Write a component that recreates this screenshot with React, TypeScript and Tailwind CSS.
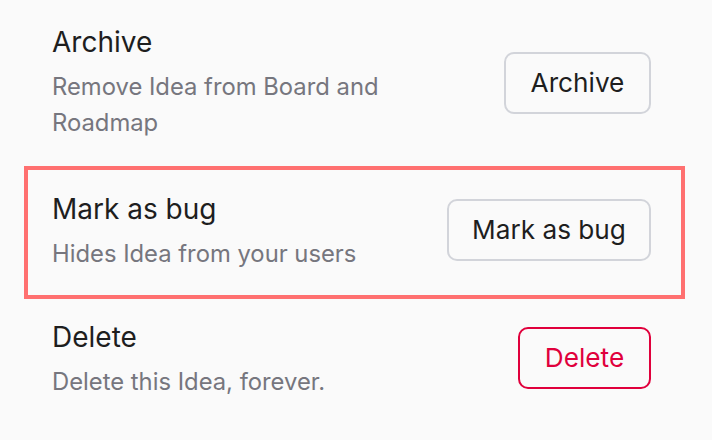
import React from "react";

type RowProps = {
  title: string;
  desc: React.ReactNode;
  button: string;
  buttonWidth: string;
  buttonShift: string;
  danger?: boolean;
  highlight?: boolean;
  height: string;
};

function Row({ title, desc, button, buttonWidth, buttonShift, danger, highlight, height }: RowProps) {
  return (
    <div
      className={`flex items-center justify-between border-4 pl-6 pr-[30px] ${height} ${
        highlight ? "border-[#ff7070]" : "border-transparent"
      }`}
    >
      <div className="flex flex-col">
        <div className="text-[28px] leading-[33px] font-normal text-[#1e1e1e]">{title}</div>
        <div className="mt-[10px] w-[345px] text-[23.8px] leading-[35.7px] text-[#76767e]">{desc}</div>
      </div>
      <button
        className={`h-[62px] shrink-0 rounded-[10px] border-2 bg-[#fafafa] text-center text-[26.2px] font-normal ${buttonWidth} ${buttonShift} ${
          danger ? "border-[#e0003c] text-[#e0003c]" : "border-[#d2d4da] text-[#1e1e1e]"
        }`}
      >
        {button}
      </button>
    </div>
  );
}

export default function App() {
  return (
    <div
      className="h-[440px] w-[712px] bg-[#fafafa] pl-6 pr-[27px]"
      style={{ fontFamily: "Inter, 'Noto Sans', sans-serif" }}
    >
      <Row
        title="Archive"
        desc="Remove Idea from Board and Roadmap"
        button="Archive"
        buttonWidth="w-[147px]"
        buttonShift="mb-0"
        height="h-[166px]"
      />
      <Row
        title="Mark as bug"
        desc="Hides Idea from your users"
        button="Mark as bug"
        buttonWidth="w-[204px]"
        buttonShift="mb-[5px]"
        highlight
        height="h-[133px]"
      />
      <Row
        title="Delete"
        desc="Delete this Idea, forever."
        button="Delete"
        buttonWidth="w-[133px]"
        buttonShift="mb-[4px]"
        danger
        height="h-[122px]"
      />
    </div>
  );
}
